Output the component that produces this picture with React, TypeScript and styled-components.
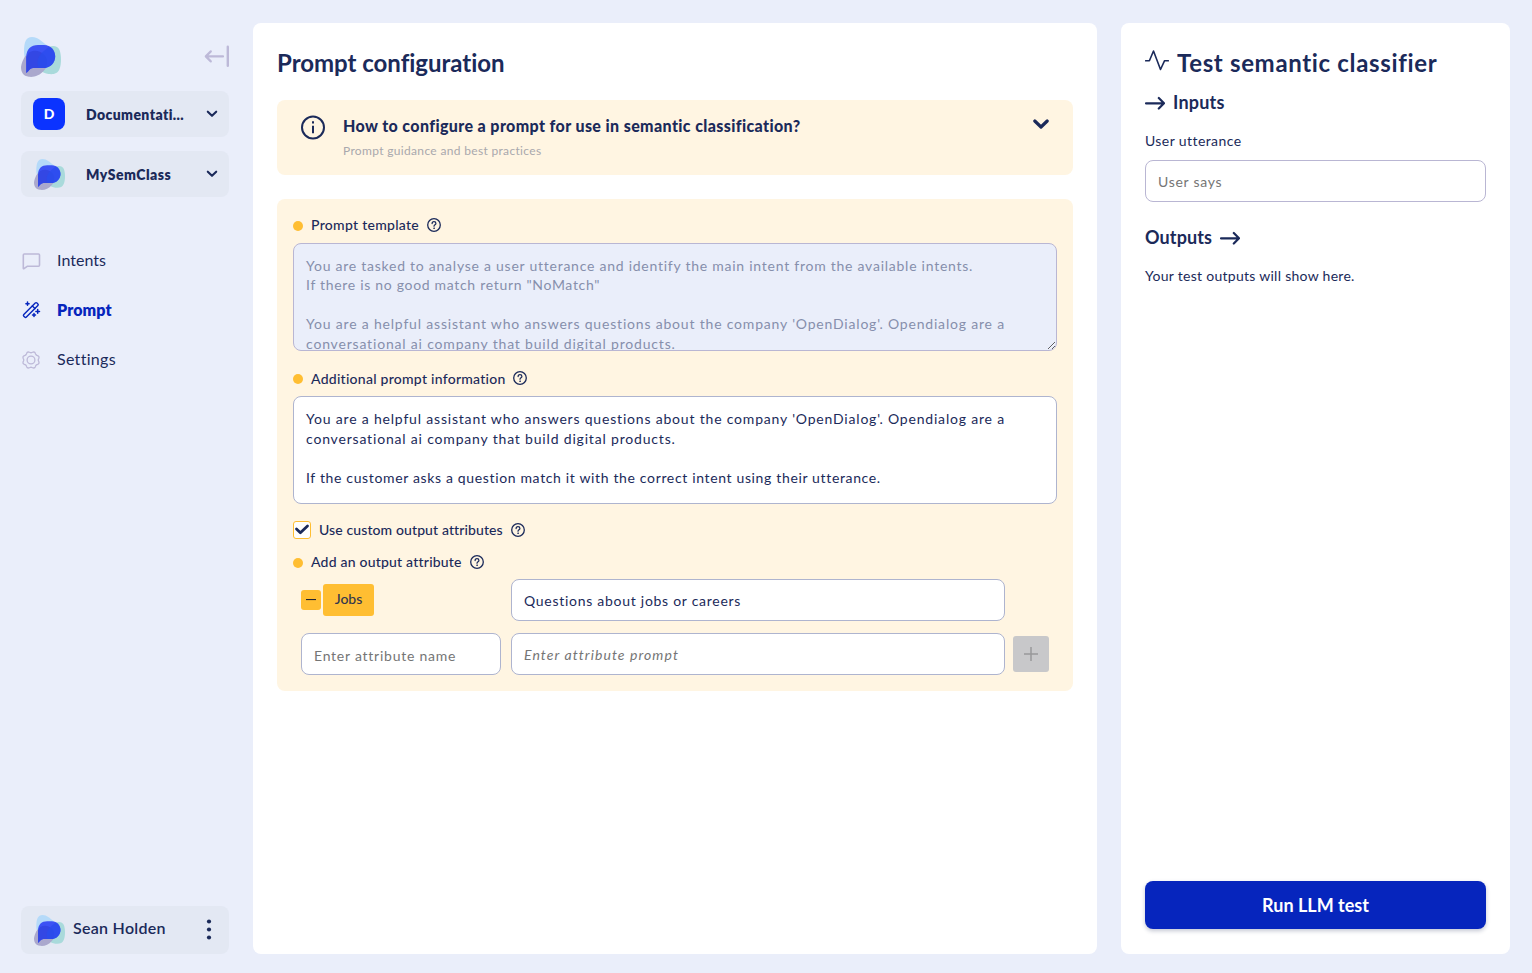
import React from "react";
import styled, { createGlobalStyle } from "styled-components";

const navy = "#1b2a5a";
const blue = "#0625bd";
const cream = "#fff5e2";
const amber = "#ffbe32";
const lilac = "#bdb9d8";

const GlobalStyle = createGlobalStyle`
  * { box-sizing: border-box; }
  body { margin: 0; background: #eaeefa; color: ${navy}; font-family: Lato, "Open Sans", sans-serif; font-size: 14px; }
  input, button { font-family: inherit; }
  svg { display: block; flex: none; }
`;

const Page = styled.div`
  display: grid;
  grid-template-columns: 208px 844px 389px;
  column-gap: 24px;
  height: 973px;
  padding: 23px 22px 19px 21px;
`;

const Sidebar = styled.aside`
  display: flex;
  flex-direction: column;
  padding-top: 14px;
`;

const SidebarTop = styled.div`
  display: flex;
  justify-content: space-between;
  height: 54px;
`;

const CollapseButton = styled.button`
  border: 0;
  padding: 0;
  margin-top: 7px;
  height: 24px;
  background: none;
`;

const Switcher = styled.button`
  display: flex;
  align-items: center;
  width: 208px;
  height: 46px;
  margin-bottom: 14px;
  padding: 0 11px 0 12px;
  border: 0;
  border-radius: 8px;
  background: #e3e8f3;
  color: ${navy};
`;

const SwitcherIcon = styled.span`
  display: flex;
  justify-content: center;
  width: 32px;
  margin-right: 21px;
`;

const Tile = styled.span`
  display: flex;
  align-items: center;
  justify-content: center;
  width: 32px;
  height: 32px;
  padding-bottom: 1px;
  border-radius: 8px;
  background: #0b33ff;
  color: #fff;
  font-size: 14px;
  font-weight: 900;
`;

const SwitcherLabel = styled.span<{ $ls: number }>`
  flex: 1;
  padding-top: 1px;
  text-align: left;
  font-size: 14px;
  font-weight: 800;
  line-height: 20px;
  letter-spacing: ${(p) => p.$ls}px;
`;

const Nav = styled.nav`
  display: flex;
  flex-direction: column;
  margin-top: 25px;
`;

const NavItem = styled.a<{ $active?: boolean; $ls: number }>`
  display: flex;
  align-items: center;
  gap: 16px;
  height: 49.5px;
  font-size: 16px;
  font-weight: ${(p) => (p.$active ? 800 : 400)};
  color: ${(p) => (p.$active ? blue : navy)};
  letter-spacing: ${(p) => p.$ls}px;
`;

const NavLabel = styled.span`
  padding-bottom: 2px;
`;

const UserCard = styled.div`
  display: flex;
  align-items: center;
  height: 48px;
  margin-top: auto;
  padding: 0 17px 0 13px;
  border-radius: 8px;
  background: #e3e8f3;
`;

const UserName = styled.span`
  flex: 1;
  margin: -6px 0 0 8px;
  font-size: 16px;
  font-weight: 600;
  letter-spacing: 0.28px;
`;

const Card = styled.section`
  display: flex;
  flex-direction: column;
  padding: 24px;
  border-radius: 8px;
  background: #fff;
`;

const Title = styled.h1<{ $ls: number }>`
  height: 30px;
  margin: 0;
  padding-top: 1px;
  font-size: 24px;
  font-weight: 700;
  line-height: 30px;
  letter-spacing: ${(p) => p.$ls}px;
`;

const Banner = styled.div`
  display: flex;
  height: 75px;
  margin-top: 23px;
  padding: 15px 24px;
  border-radius: 8px;
  background: ${cream};
`;

const BannerText = styled.div`
  flex: 1;
  margin-left: 18px;
`;

const BannerTitle = styled.div`
  padding-top: 1px;
  font-size: 16px;
  font-weight: 900;
  line-height: 20px;
  letter-spacing: 0.38px;
`;

const BannerSub = styled.div`
  margin-top: 7px;
  font-size: 12px;
  line-height: 16px;
  letter-spacing: 0.33px;
  color: #a9a8ad;
`;

const FormPanel = styled.div`
  height: 492px;
  margin-top: 24px;
  padding: 16px;
  border-radius: 8px;
  background: ${cream};
`;

const FieldLabel = styled.div<{ $top?: number; $bottom?: number }>`
  display: flex;
  align-items: center;
  gap: 8px;
  height: 20px;
  margin: ${(p) => p.$top ?? 0}px 0 ${(p) => p.$bottom ?? 0}px;
  font-size: 14px;
  font-weight: 500;
`;

const LabelText = styled.span<{ $ls: number; $level?: boolean }>`
  margin-right: -${(p) => p.$ls}px;
  padding-bottom: ${(p) => (p.$level ? 0 : 2)}px;
  letter-spacing: ${(p) => p.$ls}px;
`;

const Dot = styled.span`
  width: 10px;
  height: 10px;
  margin-top: 2px;
  border-radius: 50%;
  background: ${amber};
`;

const TextBox = styled.div<{ $readOnly?: boolean }>`
  height: 108px;
  padding: ${(p) => (p.$readOnly ? "11.600px" : "12px")} 12px 0;
  overflow: hidden;
  resize: ${(p) => (p.$readOnly ? "vertical" : "none")};
  border: 1px solid ${(p) => (p.$readOnly ? "#b9b6d3" : "#aeb4cf")};
  border-radius: 8px;
  background: ${(p) => (p.$readOnly ? "#eaeefa" : "#fff")};
  color: ${(p) => (p.$readOnly ? "#868fac" : navy)};
`;

const Line = styled.div<{ $ls?: number }>`
  height: 19.6px;
  line-height: 19.6px;
  white-space: pre;
  letter-spacing: ${(p) => p.$ls ?? 0}px;
`;

const CheckBox = styled.span`
  display: flex;
  align-items: center;
  justify-content: center;
  width: 18px;
  height: 18px;
  border: 1px solid ${amber};
  border-radius: 3px;
  background: #fff;
`;

const AttributeRow = styled.div`
  display: grid;
  grid-template-columns: 200px 494px 36px;
  align-items: center;
  column-gap: 10px;
  height: 42px;
  padding-left: 8px;
  margin-bottom: 12px;
`;

const AttributeTag = styled.div`
  display: flex;
  align-items: center;
  gap: 2px;
`;

const RemoveButton = styled.button`
  display: flex;
  align-items: center;
  justify-content: center;
  width: 20px;
  height: 20px;
  padding: 0;
  border: 0;
  border-radius: 3px;
  background: ${amber};
`;

const Tag = styled.span`
  width: 51px;
  height: 32px;
  border-radius: 3px;
  background: ${amber};
  color: #33364d;
  text-align: center;
  line-height: 30px;
  font-weight: 500;
`;

const Input = styled.input<{ $ls: number; $drop?: number; $italic?: boolean; $lilac?: boolean }>`
  width: 100%;
  height: 42px;
  padding: ${(p) => p.$drop ?? 0}px 12px 0;
  border: 1px solid ${(p) => (p.$lilac ? "#b9b6d3" : "#aeb4cf")};
  border-radius: 8px;
  outline: 0;
  background: #fff;
  color: ${navy};
  font-size: 14px;
  letter-spacing: ${(p) => p.$ls}px;
  &::placeholder {
    color: #757575;
    font-style: ${(p) => (p.$italic ? "italic" : "normal")};
  }
`;

const AddButton = styled.button`
  display: flex;
  align-items: center;
  justify-content: center;
  width: 36px;
  height: 36px;
  margin-left: -2px;
  padding: 0;
  border: 0;
  border-radius: 3px;
  background: #c8c8ca;
`;

const TestHeader = styled.div`
  display: flex;
  gap: 8px;
`;

const Section = styled.h2<{ $top: number; $ls: number }>`
  display: flex;
  align-items: center;
  gap: 8px;
  height: 24px;
  margin: ${(p) => p.$top}px 0 0;
  font-size: 18px;
  font-weight: 700;
  letter-spacing: ${(p) => p.$ls}px;
`;

const SectionText = styled.span`
  padding-bottom: 2px;
`;

const Body = styled.p<{ $top: number; $ls: number; $bottom?: number }>`
  margin: ${(p) => p.$top}px 0 ${(p) => p.$bottom ?? 0}px;
  line-height: 20px;
  letter-spacing: ${(p) => p.$ls}px;
`;

const RunButton = styled.button`
  height: 48px;
  margin: auto 0 1px;
  padding: 0;
  border: 0;
  border-radius: 8px;
  background: ${blue};
  box-shadow: 0 2px 4px rgba(20, 30, 80, 0.25);
  color: #fff;
  font-size: 18px;
  font-weight: 700;
`;

const Logo = ({ size }: { size: number }) => (
  <svg width={size} height={size} viewBox="0 0 40 40">
    <path d="M3 15C3 5 5 0 11 0c6 0 9 4 14.500 8 5 4 4 15-3.500 19H10C5 25 3 20 3 15z" fill="#b5daf9" />
    <path d="M28 10c4-2 9-1 10.500 3 2 5 2 14 0 19-2 5-6 5.500-11 5-7-1-12-6-11-13 1-6 7-12 11.500-14z" fill="#a9dadb" />
    <path d="M8 15.500c5-3 11-2 15 2 5 5 4 12 0 16-4 5-10 7-15 6.300C2 39 0 35 0 30c1-6 4-12 8-14.500z" fill="#aaa8cd" />
    <path d="M5.300 36V20C5.300 12 10 8 17 8h6c7 0 11.200 5 11.200 11.500S29 31 23 31H12c-3 0-4 3-6.700 5z" fill="#3c52f4" />
    <path d="M8 15.500c5-3 11-2 15 2 4 4 4 9 1.500 13.500H12c-3 0-4 3-6.700 5V20z" fill="#3347e4" />
    <path d="M28 10c-6 4-13 10-11.300 18 .2 1 .5 2 1 3H23c6 0 11.200-5 11.200-11.500 0-4-2.200-7.500-6.200-9.500z" fill="#2a4cee" opacity=".75" />
  </svg>
);

const Chevron = () => (
  <svg width="12" height="8" viewBox="0 0 12 8" fill="none">
    <path d="M1.800 1.700 6 5.800l4.200-4.100" stroke={navy} strokeWidth="2.100" strokeLinecap="round" strokeLinejoin="round" />
  </svg>
);

const Help = () => (
  <svg width="14" height="14" viewBox="0 0 14 14" fill="none" stroke={navy} strokeLinecap="round">
    <circle cx="7" cy="7" r="6.300" strokeWidth="1.300" />
    <path d="M5.100 5.600C5.100 4.300 6 3.700 7 3.700s1.900.7 1.900 1.700C8.900 6.700 7 6.800 7 8.200" strokeWidth="1.250" />
    <circle cx="7" cy="10.200" r=".4" strokeWidth=".7" fill={navy} />
  </svg>
);

const Arrow = () => (
  <svg width="20" height="14" viewBox="0 0 20 14" fill="none" stroke={navy} strokeWidth="2.200" strokeLinecap="round" strokeLinejoin="round">
    <path d="M1 7.300h18M13.800 2l5.200 5.300-5.200 5.200" />
  </svg>
);

const ChatIcon = () => (
  <svg width="20" height="20" viewBox="0 0 20 20" fill="none" stroke={lilac} strokeWidth="1.600" strokeLinejoin="round">
    <path d="M3.300 3h14.200c.6 0 1 .4 1 1v10.300c0 .6-.4 1-1 1H6.200L3 17.700c-.3.2-.7 0-.7-.4V4c0-.6.4-1 1-1z" />
  </svg>
);

const WandIcon = () => (
  <svg width="20" height="20" viewBox="0 0 20 20" fill="none" stroke={blue} strokeLinecap="round" strokeLinejoin="round">
    <g transform="rotate(45 9.800 10)" strokeWidth="1.400">
      <rect x="8" y="0.700" width="3.700" height="18.600" rx="1.200" />
      <path d="M8 6h3.700" />
    </g>
    <path d="M6.500 2.100v3.200M4.900 3.700h3.200M16.700 9.600v3.600M14.900 11.400h3.600M13 13.600v3M11.500 15.100h3" strokeWidth="1.500" />
  </svg>
);

const GearIcon = () => {
  const steps = 96;
  const points = Array.from({ length: steps }, (_, i) => {
    const a = (i / steps) * Math.PI * 2;
    const r = 7.900 + 0.650 * Math.cos(8 * a + Math.PI);
    return `${(10 + r * Math.cos(a)).toFixed(2)},${(10 + r * Math.sin(a)).toFixed(2)}`;
  }).join(" ");
  return (
    <svg width="20" height="20" viewBox="0 0 20 20" fill="none" stroke={lilac} strokeWidth="1.300" strokeLinejoin="round">
      <polygon points={points} />
      <circle cx="10" cy="10" r="3.900" />
    </svg>
  );
};

export default function App() {
  return (
    <>
      <GlobalStyle />
      <Page>
        <Sidebar>
          <SidebarTop>
            <Logo size={40} />
            <CollapseButton>
              <svg width="25" height="24" viewBox="0 0 25 24" fill="none" stroke={lilac} strokeWidth="2.200" strokeLinecap="round" strokeLinejoin="round">
                <path d="M19 12.400H2.200M6.800 7.400l-5 5 5 5" />
                <path d="M23.800 2.800v19" strokeWidth="2.400" />
              </svg>
            </CollapseButton>
          </SidebarTop>
          <Switcher>
            <SwitcherIcon><Tile>D</Tile></SwitcherIcon>
            <SwitcherLabel $ls={0.4}>Documentati...</SwitcherLabel>
            <Chevron />
          </Switcher>
          <Switcher>
            <SwitcherIcon><Logo size={31} /></SwitcherIcon>
            <SwitcherLabel $ls={0.47}>MySemClass</SwitcherLabel>
            <Chevron />
          </Switcher>
          <Nav>
            <NavItem $ls={0.03}><ChatIcon /><NavLabel>Intents</NavLabel></NavItem>
            <NavItem $ls={0.08} $active><WandIcon /><NavLabel>Prompt</NavLabel></NavItem>
            <NavItem $ls={0.3}><GearIcon /><NavLabel>Settings</NavLabel></NavItem>
          </Nav>
          <UserCard>
            <Logo size={31} />
            <UserName>Sean Holden</UserName>
            <svg width="6" height="22" viewBox="0 0 6 22" fill={navy}>
              <circle cx="3" cy="2.500" r="2.100" /><circle cx="3" cy="10.500" r="2.100" /><circle cx="3" cy="18.500" r="2.100" />
            </svg>
          </UserCard>
        </Sidebar>

        <Card>
          <Title $ls={-0.02}>Prompt configuration</Title>
          <Banner>
            <svg width="24" height="25" viewBox="0 0 24 25" fill="none" stroke={navy}>
              <circle cx="12" cy="12.500" r="11" strokeWidth="2" />
              <path d="M12 10.700v7.600" strokeWidth="2" />
              <path d="M12 6.300v2.100" strokeWidth="2" />
            </svg>
            <BannerText>
              <BannerTitle>How to configure a prompt for use in semantic classification?</BannerTitle>
              <BannerSub>Prompt guidance and best practices</BannerSub>
            </BannerText>
            <svg width="16" height="18" viewBox="0 0 16 18" fill="none">
              <path d="M1.800 6 8 12l6.200-6" stroke={navy} strokeWidth="3.200" strokeLinecap="round" strokeLinejoin="round" />
            </svg>
          </Banner>
          <FormPanel>
            <FieldLabel $bottom={8}><Dot /><LabelText $ls={0.29}>Prompt template</LabelText><Help /></FieldLabel>
            <TextBox $readOnly>
              <Line $ls={0.75}>You are tasked to analyse a user utterance and identify the main intent from the available intents.</Line>
              <Line $ls={0.69}>If there is no good match return "NoMatch"</Line>
              <Line />
              <Line $ls={0.81}>You are a helpful assistant who answers questions about the company 'OpenDialog'. Opendialog are a</Line>
              <Line $ls={0.82}>conversational ai company that build digital products.</Line>
            </TextBox>
            <FieldLabel $top={17} $bottom={8}><Dot /><LabelText $ls={0.26} $level>Additional prompt information</LabelText><Help /></FieldLabel>
            <TextBox>
              <Line $ls={0.81}>You are a helpful assistant who answers questions about the company 'OpenDialog'. Opendialog are a</Line>
              <Line $ls={0.82}>conversational ai company that build digital products.</Line>
              <Line />
              <Line $ls={0.65}>If the customer asks a question match it with the correct intent using their utterance.</Line>
            </TextBox>
            <FieldLabel $top={16}>
              <CheckBox>
                <svg width="16" height="16" viewBox="0 0 16 16" fill="none">
                  <path d="M2.500 7 6.400 10.700l7.100-6.700" stroke={navy} strokeWidth="2.800" strokeLinecap="round" strokeLinejoin="round" />
                </svg>
              </CheckBox>
              <LabelText $ls={0.11}>Use custom output attributes</LabelText><Help />
            </FieldLabel>
            <FieldLabel $top={12} $bottom={7}><Dot /><LabelText $ls={0.21}>Add an output attribute</LabelText><Help /></FieldLabel>
            <AttributeRow>
              <AttributeTag>
                <RemoveButton>
                  <svg width="10" height="2" viewBox="0 0 10 2"><path d="M0 .5h10" stroke="#22242f" strokeWidth="1.200" /></svg>
                </RemoveButton>
                <Tag>Jobs</Tag>
              </AttributeTag>
              <Input $ls={0.72} $drop={1} defaultValue="Questions about jobs or careers" />
            </AttributeRow>
            <AttributeRow>
              <Input $ls={0.76} $drop={2} placeholder="Enter attribute name" />
              <Input $ls={1.08} $italic placeholder="Enter attribute prompt" />
              <AddButton>
                <svg width="16" height="16" viewBox="0 0 16 16"><path d="M1 8h14M8 1v14" stroke="#98989a" strokeWidth="1.500" /></svg>
              </AddButton>
            </AttributeRow>
          </FormPanel>
        </Card>

        <Card>
          <TestHeader>
            <svg width="24" height="30" viewBox="0 0 24 30" fill="none" stroke={navy} strokeWidth="1.600" strokeLinecap="round" strokeLinejoin="round">
              <path d="M.7 13.700h3.700L8.500 4l7 18.500 4.100-8.800h3.700" />
            </svg>
            <Title $ls={0.66}>Test semantic classifier</Title>
          </TestHeader>
          <Section $top={14} $ls={0.2}><Arrow /><SectionText>Inputs</SectionText></Section>
          <Body $top={16} $bottom={9} $ls={0.41}>User utterance</Body>
          <Input $ls={0.72} $drop={1} $lilac placeholder="User says" />
          <Section $top={24} $ls={0.12}><SectionText>Outputs</SectionText><Arrow /></Section>
          <Body $top={16} $ls={0.28}>Your test outputs will show here.</Body>
          <RunButton>Run LLM test</RunButton>
        </Card>
      </Page>
    </>
  );
}
